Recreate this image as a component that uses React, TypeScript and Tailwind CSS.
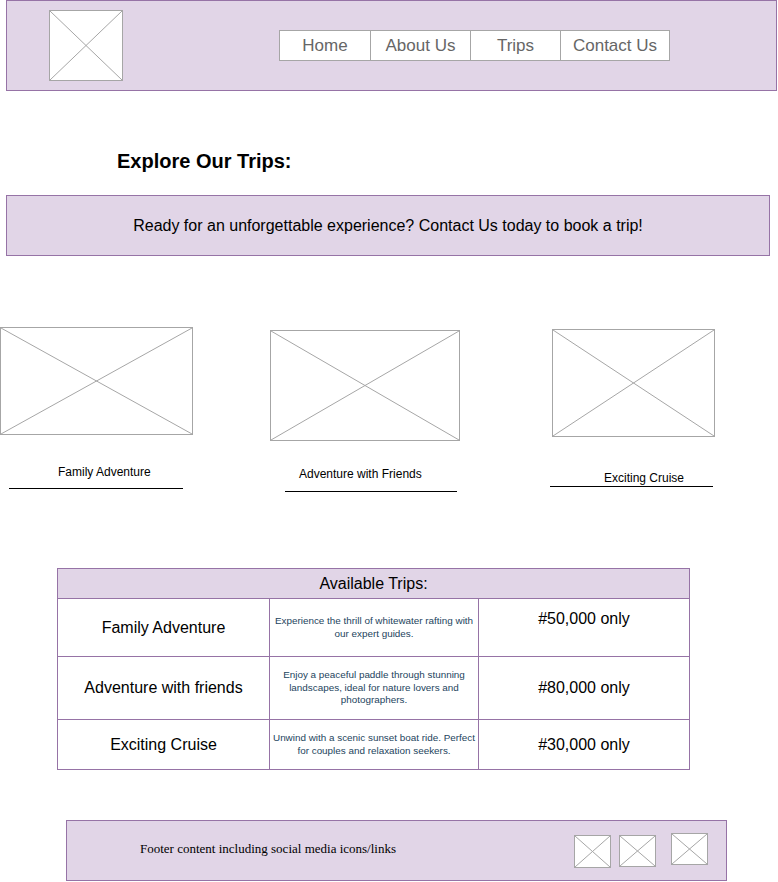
import React from "react";

type BoxProps = { className?: string };

function Placeholder({ className = "" }: BoxProps): JSX.Element {
  return (
    <div className={`relative bg-white border border-[#a6a6a6] ${className}`}>
      <svg
        className="absolute inset-0 w-full h-full"
        viewBox="0 0 100 100"
        preserveAspectRatio="none"
      >
        <line x1="0" y1="0" x2="100" y2="100" stroke="#a6a6a6" strokeWidth="1" vectorEffect="non-scaling-stroke" />
        <line x1="100" y1="0" x2="0" y2="100" stroke="#a6a6a6" strokeWidth="1" vectorEffect="non-scaling-stroke" />
      </svg>
    </div>
  );
}

const navLinks = [
  { id: 1, title: "Home", w: "w-[90px]" },
  { id: 2, title: "About Us", w: "w-[100px]" },
  { id: 3, title: "Trips", w: "w-[90px]" },
  { id: 4, title: "Contact Us", w: "w-[109px]" },
];

const trips = [
  {
    name: "Family Adventure",
    desc: "Experience the thrill of whitewater rafting with our expert guides.",
    price: "#50,000 only",
    rowH: "h-[57px]",
    priceAlign: "items-start pt-[8px]",
  },
  {
    name: "Adventure with friends",
    desc: "Enjoy a peaceful paddle through stunning landscapes, ideal for nature lovers and photographers.",
    price: "#80,000 only",
    rowH: "h-[63px]",
    priceAlign: "items-center",
  },
  {
    name: "Exciting Cruise",
    desc: "Unwind with a scenic sunset boat ride. Perfect for couples and relaxation seekers.",
    price: "#30,000 only",
    rowH: "h-[50px]",
    priceAlign: "items-center",
  },
];

function App(): JSX.Element {
  return (
    <div className="w-[778px] h-[882px] bg-white overflow-hidden font-['Liberation_Sans',Arial,sans-serif] text-black">
      {/* header */}
      <div className="ml-[6px] w-[771px] h-[91px] bg-[#e1d5e7] border border-[#9673a6] flex items-start">
        <Placeholder className="ml-[42px] mt-[9px] w-[74px] h-[71px]" />
        <div className="ml-[156px] mt-[29px] flex border border-[#a6a6a6] bg-white h-[31px]">
          {navLinks.map((link, i) => (
            <a
              key={link.id}
              href="#"
              className={`${link.w} flex items-center justify-center text-[17px] text-[#666666] ${
                i > 0 ? "border-l border-[#a6a6a6]" : ""
              }`}
            >
              {link.title}
            </a>
          ))}
        </div>
      </div>

      {/* heading */}
      <h1 className="mt-[58px] pl-[117px] text-[20px] leading-[24px] font-bold">Explore Our Trips:</h1>

      {/* banner */}
      <div className="mt-[22px] ml-[6px] w-[764px] h-[61px] bg-[#e1d5e7] border border-[#9673a6] flex items-center justify-center text-[16px]">
        Ready for an unforgettable experience? Contact Us today to book a trip!
      </div>

      {/* trip cards */}
      <div className="mt-[71px] flex items-start text-[12px] leading-[14px]">
        <div className="flex flex-col w-[193px]">
          <Placeholder className="w-[193px] h-[108px]" />
          <span className="mt-[30px] ml-[58px]">Family Adventure</span>
          <div className="mt-[9px] ml-[9px] w-[174px] h-[1px] bg-black" />
        </div>
        <div className="ml-[77px] mt-[3px] flex flex-col w-[190px]">
          <Placeholder className="w-[190px] h-[111px]" />
          <span className="mt-[26px] ml-[29px]">Adventure with Friends</span>
          <div className="mt-[10px] ml-[15px] w-[172px] h-[1px] bg-black" />
        </div>
        <div className="ml-[92px] mt-[2px] flex flex-col w-[163px]">
          <Placeholder className="w-[163px] h-[108px]" />
          <span className="mt-[34px] ml-[52px]">Exciting Cruise</span>
          <div className="mt-[1px] -ml-[2px] w-[163px] h-[1px] bg-black" />
        </div>
      </div>

      {/* table */}
      <div className="mt-[76px] ml-[57px] w-[633px] border border-[#9673a6]">
        <div className="h-[30px] bg-[#e1d5e7] flex items-center justify-center text-[16px] border-b border-[#9673a6]">
          Available Trips:
        </div>
        {trips.map((trip, i) => (
          <div
            key={trip.name}
            className={`grid grid-cols-[211px_210px_210px] ${trip.rowH} ${
              i > 0 ? "border-t border-[#9673a6]" : ""
            }`}
          >
            <div className="flex items-center justify-center text-[16px]">{trip.name}</div>
            <div className="flex items-center justify-center text-center text-[9.9px] leading-[12.5px] text-[#23445d] border-l border-r border-[#9673a6]">
              {trip.desc}
            </div>
            <div className={`flex justify-center text-[16px] ${trip.priceAlign}`}>{trip.price}</div>
          </div>
        ))}
      </div>

      {/* footer */}
      <div className="mt-[50px] ml-[66px] w-[661px] h-[61px] bg-[#e1d5e7] border border-[#9673a6] flex items-center">
        <p className="ml-[73px] mb-[3px] font-['Liberation_Serif','Times_New_Roman',serif] text-[13px]">
          Footer content including social media icons/links
        </p>
        <div className="ml-auto mr-[18px] flex items-start">
          <Placeholder className="mt-[2px] w-[37px] h-[33px]" />
          <Placeholder className="ml-[8px] mt-[2px] w-[37px] h-[32px]" />
          <Placeholder className="ml-[15px] w-[37px] h-[32px]" />
        </div>
      </div>
    </div>
  );
}

export default App;
